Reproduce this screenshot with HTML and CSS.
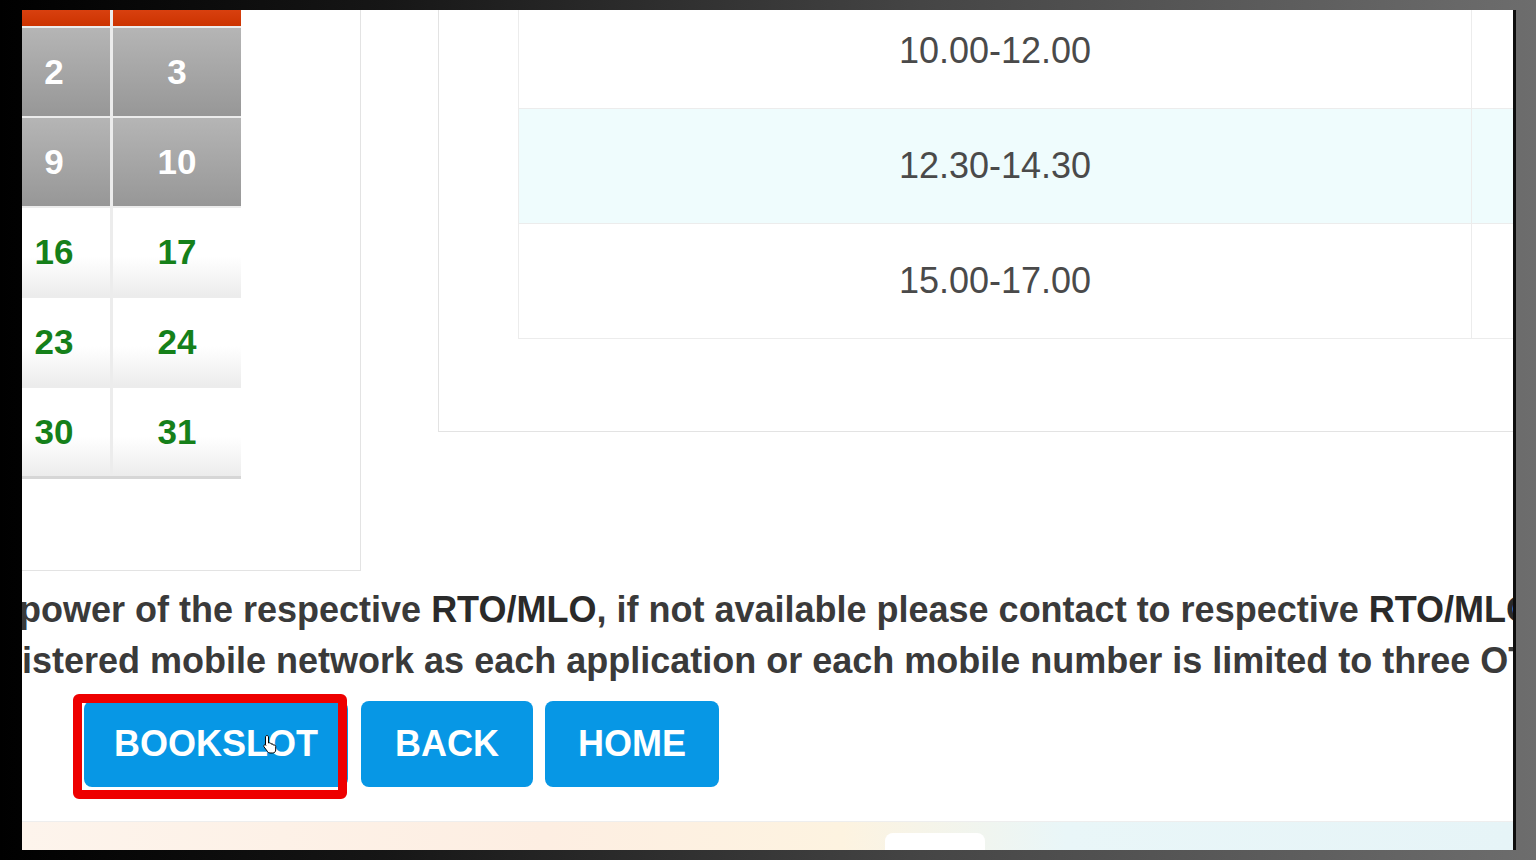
FILE: index.html
```html
<!DOCTYPE html>
<html lang="en">
<head>
  <meta charset="UTF-8" />
  <meta name="viewport" content="width=device-width, initial-scale=1.0" />
  <title>Book Slot</title>
  <link rel="stylesheet" href="styles.css">
</head>
<body>
  <div class="screen">
    <div class="page">
      <div class="top">
        <div class="cal-panel">
          <div class="calendar">
            <div class="cal-head"></div>
            <div class="cal-head"></div>
            <div class="day past">2</div>
            <div class="day past">3</div>
            <div class="day past">9</div>
            <div class="day past">10</div>
            <div class="day open">16</div>
            <div class="day open">17</div>
            <div class="day open">23</div>
            <div class="day open">24</div>
            <div class="day open">30</div>
            <div class="day open">31</div>
          </div>
        </div>
        <div class="slot-panel">
          <table class="slots">
            <tr><td class="time">10.00-12.00</td><td></td></tr>
            <tr class="alt"><td class="time">12.30-14.30</td><td></td></tr>
            <tr><td class="time">15.00-17.00</td><td></td></tr>
          </table>
        </div>
      </div>

      <div class="note">
        <p class="first">power of the respective <b>RTO/MLO</b>, if not available please contact to respective <b>RTO/MLO</b></p>
        <p>istered mobile network as each application or each mobile number is limited to three OTP</p>
      </div>

      <div class="actions">
        <button class="btn btn-book">BOOKSLOT</button>
        <button class="btn btn-back">BACK</button>
        <button class="btn btn-home">HOME</button>
        <span class="highlight"></span>
        <svg class="pointer" width="16" height="20" viewBox="0 0 16 20">
          <path d="M5 1.5c.8 0 1.5.7 1.5 1.5v6l1-.2c.8 0 1.5.5 1.5 1.2l1-.1c.8 0 1.4.5 1.4 1.2l.9-.1c.8 0 1.4.6 1.4 1.4V16c0 1.8-1.3 3-3 3H8c-1 0-1.8-.5-2.4-1.3L2 12.8c-.5-.7-.3-1.5.4-1.9.6-.3 1.3-.1 1.7.4L3.5 10.5V3c0-.8.7-1.5 1.5-1.5z" fill="#fff" stroke="#000" stroke-width="1"/>
        </svg>
      </div>

      <div class="footer-strip"><span class="tab"></span></div>
    </div>
  </div>
</body>
</html>
```

FILE: styles.css
```css
body {
  margin: 0;
  font-family: "Liberation Sans", Arial, sans-serif;
  background: #000;
}
.screen {
  width: 1536px;
  height: 860px;
  box-sizing: border-box;
  padding: 10px 20px 10px 22px;
  background: linear-gradient(90deg, #000 0%, #161616 25%, #454545 60%, #6d6d6d 100%);
}
.page {
  height: 840px;
  background: #fff;
  border-right: 3px solid #0d0d0d;
  overflow: hidden;
  display: flex;
  flex-direction: column;
  position: relative;
}
.top {
  display: flex;
  height: 561px;
  flex-shrink: 0;
}
.cal-panel {
  width: 339px;
  flex-shrink: 0;
  box-sizing: border-box;
  border-right: 1px solid #e3e3e3;
  border-bottom: 1px solid #e3e3e3;
}
.calendar {
  display: grid;
  grid-template-columns: 112px 128px;
  grid-template-rows: 16px repeat(5, 88px);
  gap: 2px 3px;
  margin-left: -24px;
  width: 243px;
  background: #ececec;
  border-bottom: 3px solid #d6d6d6;
}
.cal-head {
  background: linear-gradient(#d8400f, #cc3300);
}
.day {
  display: flex;
  align-items: center;
  justify-content: center;
  font-size: 35px;
  font-weight: bold;
}
.day.past {
  color: #fff;
  background: linear-gradient(#b5b5b5, #979797);
}
.day.open {
  color: #15801a;
  background: linear-gradient(#fff 0%, #fff 55%, #ececec 100%);
}
.slot-panel {
  width: 1200px;
  flex-shrink: 0;
  margin-left: 77px;
  height: 422px;
  box-sizing: border-box;
  border-left: 1px solid #e3e3e3;
  border-bottom: 1px solid #e3e3e3;
  padding-left: 79px;
}
.slots {
  width: 100%;
  border-collapse: collapse;
  margin-top: -17px;
}
.slots td {
  height: 114px;
  padding: 0;
  border: 1px solid #ececec;
}
.slots td.time {
  width: 952px;
  text-align: center;
  font-size: 36px;
  color: #4a4a4a;
}
.slots tr.alt td {
  background: #effcfd;
}
.note {
  margin-top: 13px;
}
.note p {
  margin: 0;
  font-size: 36px;
  font-weight: bold;
  line-height: 51px;
  color: #3a3a3a;
  white-space: nowrap;
}
.note p b {
  color: #2a2a2a;
}
.note p.first {
  margin-left: -3px;
}
.actions {
  position: relative;
  display: flex;
  gap: 12px;
  margin-top: 15px;
  padding-left: 62px;
}
.btn {
  height: 86px;
  padding: 0 33px;
  border: none;
  border-radius: 8px;
  background: #0797e5;
  color: #fff;
  font-family: "Liberation Sans", Arial, sans-serif;
  font-size: 36px;
  font-weight: bold;
}
.btn-book {
  padding: 0 30px;
  margin-right: 1px;
}
.btn-back {
  padding: 0 34px;
}
.highlight {
  position: absolute;
  left: 51px;
  top: -7px;
  width: 274px;
  height: 105px;
  box-sizing: border-box;
  border: 9px solid #ee0000;
  border-radius: 6px;
}
.pointer {
  position: absolute;
  left: 240px;
  top: 33px;
}
.footer-strip {
  margin-top: auto;
  height: 28px;
  border-top: 1px solid #eeeeee;
  background: linear-gradient(90deg, #fdf4ec 0%, #fdeee2 35%, #fdf3e0 55%, #e9f6f8 70%, #e6f4f7 100%);
  position: relative;
}
.tab {
  position: absolute;
  left: 863px;
  bottom: 0;
  width: 100px;
  height: 17px;
  background: #fff;
  border-radius: 8px 8px 0 0;
}
```
